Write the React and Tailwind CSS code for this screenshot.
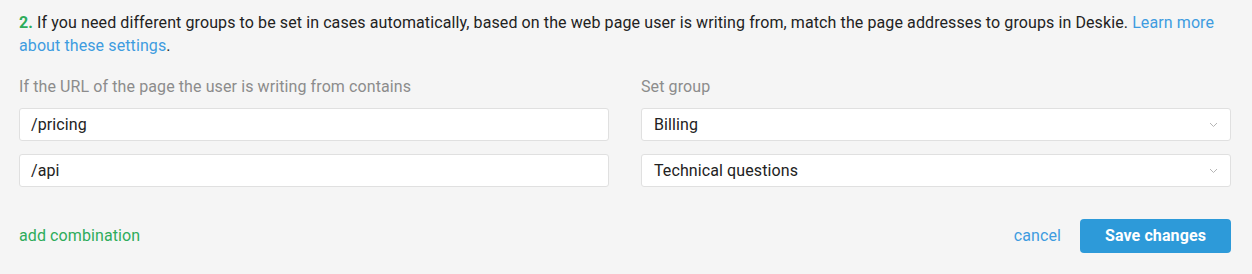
import React from 'react'

function Chevron() {
  return (
    <svg width="9" height="6" viewBox="0 0 9 6" className="text-[#b5b5b5]">
      <path d="M1 1l3.5 3.5L8 1" fill="none" stroke="currentColor" strokeWidth="1" />
    </svg>
  )
}

const rows = [
  { url: '/pricing', group: 'Billing' },
  { url: '/api', group: 'Technical questions' },
]

export default function App() {
  return (
    <div className="w-[1252px] h-[274px] bg-[#f5f5f5] px-[19px] pt-[11px] font-['Roboto',sans-serif] text-[16px] tracking-[0.1px] text-[#222]">
      <p className="leading-[23px] pr-[2px]">
        <span className="text-[#2eac5b] font-bold">2.</span> If you need different groups to be set in cases automatically, based on the web page user is writing from, match the page addresses to groups in Deskie.{' '}
        <a className="text-[#3e9ce0]">Learn more about these settings</a>.
      </p>

      <div className="grid grid-cols-2 gap-x-[32px] mt-[20px] pr-[2px]">
        <div className="text-[#8c8c8c] leading-[20px]">If the URL of the page the user is writing from contains</div>
        <div className="text-[#8c8c8c] leading-[20px]">Set group</div>
      </div>

      <div className="flex flex-col gap-[13px] mt-[11px] pr-[2px]">
        {rows.map((r) => (
          <div key={r.url} className="grid grid-cols-2 gap-x-[32px]">
            <div className="h-[33px] bg-white border border-[#e0e0e0] rounded-[3px] px-[11px] flex items-center">{r.url}</div>
            <div className="h-[33px] bg-white border border-[#e0e0e0] rounded-[3px] pl-[12px] pr-[12px] flex items-center justify-between">
              <span>{r.group}</span>
              <Chevron />
            </div>
          </div>
        ))}
      </div>

      <div className="flex items-center justify-between mt-[32px] pr-[2px]">
        <a className="text-[#2eac5b]">add combination</a>
        <div className="flex items-center gap-[19px]">
          <a className="text-[#3e9ce0]">cancel</a>
          <button className="w-[151px] h-[34px] rounded-[4px] bg-[#2d9ad9] text-white font-bold">Save changes</button>
        </div>
      </div>
    </div>
  )
}
